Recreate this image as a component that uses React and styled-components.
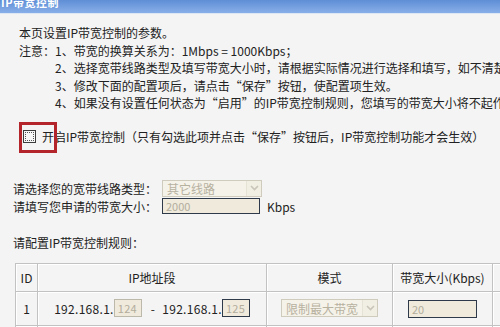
import React from "react";
import styled, { createGlobalStyle } from "styled-components";

const Global = createGlobalStyle`
  html, body { margin: 0; padding: 0; background: #f4f4f4; }
  body {
    font-family: "Noto Sans CJK SC", "Noto Sans", sans-serif;
    font-size: 12px;
    color: #222;
  }
`;

const Page = styled.div`
  width: 500px;
  height: 327px;
  overflow: hidden;
  background: #f4f4f4;
`;

const TitleBar = styled.div`
  height: 13px;
  overflow: hidden;
  background: linear-gradient(#5f8ed6, #88afe8);
  border-bottom: 1px solid #dde6f3;
  color: #fff;
  font-size: 11px;
  font-weight: bold;
  line-height: 11px;
  white-space: nowrap;
`;

const TitleText = styled.div`
  margin-top: -3px;
  margin-left: 1px;
  letter-spacing: 0.5px;
`;

const Intro = styled.div`
  margin-top: 10px;
  padding-left: 19px;
  line-height: 17.5px;
  white-space: nowrap;
`;

const NoteRow = styled.div`
  display: flex;
`;

const NoteLabel = styled.span`
  flex: none;
  width: 36px;
`;

const CheckRow = styled.div`
  position: relative;
  margin-top: 15px;
  height: 20px;
  display: flex;
  align-items: center;
  gap: 6px;
  padding-left: 23px;
  white-space: nowrap;
`;

const Highlight = styled.div`
  position: absolute;
  left: 19px;
  top: -5px;
  width: 32px;
  height: 25px;
  border: 3px solid #b4252b;
  pointer-events: none;
`;

const CheckBox = styled.span`
  flex: none;
  width: 11px;
  height: 11px;
  border: 1px solid #3c3c3c;
  background: #f7f7f7;
  outline: 1px dotted #555;
  outline-offset: -3px;
`;

const FormRow = styled.div`
  display: flex;
  align-items: center;
  height: 17px;
  padding-left: 13px;
  margin-top: ${(p) => p.$top || 0}px;
  white-space: nowrap;
`;

const FormLabel = styled.span`
  width: 149px;
  flex: none;
`;

const SelectBox = styled.div`
  box-sizing: border-box;
  width: ${(p) => p.$w}px;
  height: ${(p) => p.$h}px;
  display: flex;
  align-items: center;
  justify-content: space-between;
  border: 1px solid #cfcbbd;
  background: #f5f2e9;
  color: #b7b1a0;
  font-size: 12px;
  padding-left: 4px;
  flex: none;
`;

const ArrowBtn = styled.span`
  box-sizing: border-box;
  width: 15px;
  height: 100%;
  display: flex;
  align-items: center;
  justify-content: center;
  border-left: 1px solid #e6e2d6;
  background: #f1eee4;
`;

const TextBox = styled.div`
  box-sizing: border-box;
  width: ${(p) => p.$w}px;
  height: ${(p) => p.$h}px;
  border: 1px solid ${(p) => (p.$dark ? "#2e3a4a" : "#bcb8aa")};
  background: #efeadc;
  color: #b3ad9c;
  font-size: 11px;
  line-height: ${(p) => p.$h - 2}px;
  padding-left: 3px;
  flex: none;
  display: inline-block;
  vertical-align: middle;
  text-align: left;
`;

const Unit = styled.span`
  margin-left: 7px;
`;

const SectionTitle = styled.div`
  margin-top: 18px;
  padding-left: 13px;
  line-height: 20px;
`;

const Table = styled.table`
  margin-top: 10px;
  margin-left: 15px;
  width: 560px;
  border-collapse: collapse;
  table-layout: fixed;
  border: 1px solid #b9b9b9;
`;

const Cell = styled.td`
  border: 1px solid #c2c2c2;
  box-shadow: inset 1px 1px 0 #ffffff;
  text-align: center;
  padding: 0;
  height: ${(p) => p.$h}px;
  vertical-align: ${(p) => (p.$top ? "top" : "middle")};
  padding-top: ${(p) => (p.$top ? 1 : 0)}px;
  white-space: nowrap;
`;

const HeadCell = styled(Cell).attrs({ as: "th" })`
  font-weight: normal;
`;

const IpGroup = styled.div`
  display: inline-flex;
  align-items: center;
  letter-spacing: 0.3px;
`;

const Dash = styled.span`
  margin: 0 7px 0 9px;
`;

const Chevron = () => (
  <svg width="9" height="6" viewBox="0 0 9 6">
    <path d="M1 1 L4.5 4.5 L8 1" fill="none" stroke="#c9c5b8" strokeWidth="1.6" />
  </svg>
);

const IpCell = ({ a, b, h, top }) => (
  <Cell $h={h} $top={top}>
    <IpGroup>
      <span>192.168.1.</span>
      <TextBox $w={28} $h={18}>{a}</TextBox>
      <Dash>-</Dash>
      <span>192.168.1.</span>
      <TextBox $w={28} $h={18} $dark>{b}</TextBox>
    </IpGroup>
  </Cell>
);

export default function App() {
  return (
    <Page>
      <Global />
      <TitleBar>
        <TitleText>IP带宽控制</TitleText>
      </TitleBar>
      <Intro>
        <div>本页设置IP带宽控制的参数。</div>
        <NoteRow>
          <NoteLabel>注意：</NoteLabel>
          <div>
            <div>1、带宽的换算关系为：1Mbps = 1000Kbps；</div>
            <div>2、选择宽带线路类型及填写带宽大小时，请根据实际情况进行选择和填写，如不清楚，请咨询您的带宽提供商；</div>
            <div>3、修改下面的配置项后，请点击“保存”按钮，使配置项生效。</div>
            <div>4、如果没有设置任何状态为“启用”的IP带宽控制规则，您填写的带宽大小将不起作用。</div>
          </div>
        </NoteRow>
      </Intro>
      <CheckRow>
        <CheckBox />
        <span>开启IP带宽控制（只有勾选此项并点击“保存”按钮后，IP带宽控制功能才会生效）</span>
        <Highlight />
      </CheckRow>
      <FormRow $top={33}>
        <FormLabel>请选择您的宽带线路类型：</FormLabel>
        <SelectBox $w={100} $h={17}>
          <span>其它线路</span>
          <ArrowBtn><Chevron /></ArrowBtn>
        </SelectBox>
      </FormRow>
      <FormRow $top={1}>
        <FormLabel>请填写您申请的带宽大小：</FormLabel>
        <TextBox $w={98} $h={16} $dark>2000</TextBox>
        <Unit>Kbps</Unit>
      </FormRow>
      <SectionTitle>请配置IP带宽控制规则：</SectionTitle>
      <Table>
        <colgroup>
          <col style={{ width: 22 }} />
          <col style={{ width: 229 }} />
          <col style={{ width: 126 }} />
          <col style={{ width: 100 }} />
          <col />
        </colgroup>
        <thead>
          <tr>
            <HeadCell $h={27}>ID</HeadCell>
            <HeadCell $h={27}>IP地址段</HeadCell>
            <HeadCell $h={27}>模式</HeadCell>
            <HeadCell $h={27}>带宽大小(Kbps)</HeadCell>
            <HeadCell $h={27}>启用</HeadCell>
          </tr>
        </thead>
        <tbody>
          <tr>
            <Cell $h={33}>1</Cell>
            <IpCell a="124" b="125" h={33} />
            <Cell $h={33}>
              <SelectBox $w={97} $h={18} style={{ display: "inline-flex" }}>
                <span>限制最大带宽</span>
                <ArrowBtn><Chevron /></ArrowBtn>
              </SelectBox>
            </Cell>
            <Cell $h={33}>
              <TextBox $w={69} $h={18} $dark>20</TextBox>
            </Cell>
            <Cell $h={33} />
          </tr>
          <tr>
            <Cell $h={33} $top>2</Cell>
            <IpCell a="" b="" h={33} top />
            <Cell $h={33} $top>
              <SelectBox $w={97} $h={18} style={{ display: "inline-flex" }}>
                <span>限制最大带宽</span>
                <ArrowBtn><Chevron /></ArrowBtn>
              </SelectBox>
            </Cell>
            <Cell $h={33} $top>
              <TextBox $w={69} $h={18} $dark />
            </Cell>
            <Cell $h={33} $top />
          </tr>
        </tbody>
      </Table>
    </Page>
  );
}
